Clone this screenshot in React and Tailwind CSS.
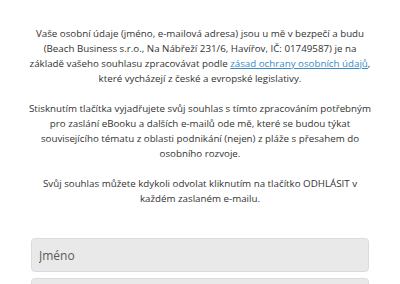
import React from 'react';

const font = { fontFamily: '"Open Sans", "Liberation Sans", sans-serif' };

export default function App() {
  return (
    <div className="w-[400px] h-[284px] overflow-hidden bg-white" style={font}>
      <div className="px-[28px] pt-[26px] text-center text-[9.75px] leading-[15px] text-[#333]">
        <p>
          Vaše osobní údaje (jméno, e-mailová adresa) jsou u mě v bezpečí a budu (Beach Business s.r.o., Na Nábřeží 231/6, Havířov, IČ: 01749587) je na základě vašeho souhlasu zpracovávat podle{' '}
          <a href="#" className="text-[#3a8bc4] underline">zásad ochrany osobních údajů</a>, které vycházejí z české a evropské legislativy.
        </p>
        <p className="mt-[15px]">
          Stisknutím tlačítka vyjadřujete svůj souhlas s tímto zpracováním potřebným pro zaslání eBooku a dalších e-mailů ode mě, které se budou týkat souvisejícího tématu z oblasti podnikání (nejen) z pláže s přesahem do osobního rozvoje.
        </p>
        <p className="mt-[15px]">
          Svůj souhlas můžete kdykoli odvolat kliknutím na tlačítko ODHLÁSIT v každém zaslaném e-mailu.
        </p>
      </div>
      <form className="px-[31px] mt-[32px] flex flex-col gap-[6px]">
        <input
          type="text"
          placeholder="Jméno"
          className="h-[34px] w-full rounded-[4px] border border-[#dcdcdc] bg-[#e9e9e9] px-[7px] text-[12px] text-[#555] placeholder:text-[#5a5a5a] outline-none"
          style={font}
        />
        <input
          type="email"
          placeholder="E-mail"
          className="h-[34px] w-full rounded-[4px] border border-[#dcdcdc] bg-[#e9e9e9] px-[7px] text-[12px] text-[#555] placeholder:text-[#5a5a5a] outline-none"
          style={font}
        />
      </form>
    </div>
  );
}
